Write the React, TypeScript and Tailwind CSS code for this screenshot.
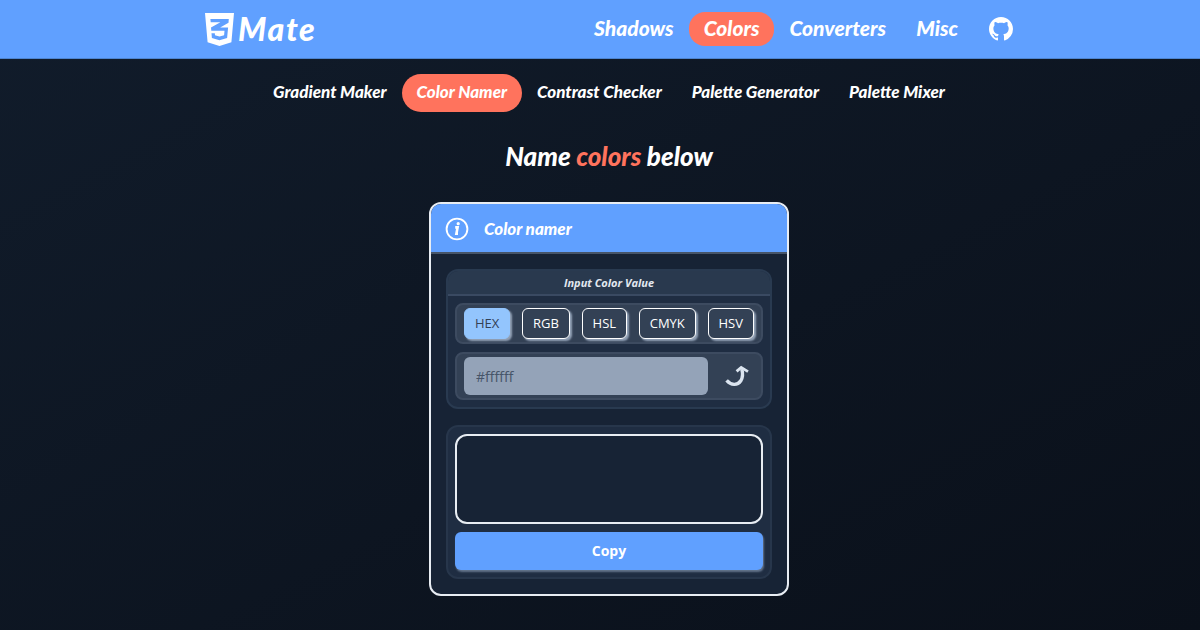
import { BsGithub } from "react-icons/bs";

const display = "font-['Lato',sans-serif] font-black italic";

const mainLinks = ["Shadows", "Colors", "Converters", "Misc"];
const subLinks = [
  "Gradient Maker",
  "Color Namer",
  "Contrast Checker",
  "Palette Generator",
  "Palette Mixer",
];
const formats = ["HEX", "RGB", "HSL", "CMYK", "HSV"];

function ShieldLogo() {
  return (
    <svg viewBox="0 0 29 33" className="h-[33px] w-[29px]" aria-hidden="true">
      <path
        fill="currentColor"
        fillRule="evenodd"
        d="M0 0H29L26.4 29.2 14.5 33 2.6 29.2ZM5.4 6 5.7 9.3H15.4L6 14.6 6.3 17.8H19.5L19.1 22.2 14.5 23.6 10 22.3 9.8 20.2H6.5L6.9 25 14.5 27.2 22.1 25 23.1 14.5H15.2L23.5 9.8 23.8 6Z"
      />
    </svg>
  );
}

function Header() {
  return (
    <header className="border-b border-[#4d84d0] bg-[#60a0ff] pl-[18px]">
      <div className="mx-auto flex h-[58px] max-w-[808px] items-center justify-between">
        <a href="#home" className="flex items-center gap-1 text-white">
          <ShieldLogo />
          <span className="font-['Lato',sans-serif] text-[32px] font-black italic tracking-wider">
            Mate
          </span>
        </a>
        <nav aria-label="Main" className="flex items-center">
          {mainLinks.map((label) => (
            <a
              key={label}
              href={`#${label.toLowerCase()}`}
              className={`${display} rounded-2xl px-[15px] pt-0.5 pb-1 text-[21px] leading-7 text-white ${
                label === "Colors" ? "bg-[#ff735d]" : ""
              }`}
            >
              {label}
            </a>
          ))}
          <a href="#github" aria-label="GitHub" className="ml-4 text-white">
            <BsGithub className="size-6" aria-hidden="true" />
          </a>
        </nav>
      </div>
    </header>
  );
}

function SubNav() {
  return (
    <nav aria-label="Color tools" className="flex justify-center pt-[15px]">
      {subLinks.map((label) => (
        <a
          key={label}
          href={`#${label.toLowerCase().replace(" ", "-")}`}
          className={`${display} rounded-full px-[15px] pt-1.5 pb-2 text-[17px] leading-6 text-white ${
            label === "Color Namer" ? "bg-[#ff735d]" : ""
          }`}
        >
          {label}
        </a>
      ))}
    </nav>
  );
}

function ColorNamer() {
  return (
    <section className="mx-auto mt-[30px] w-full max-w-[360px] overflow-hidden rounded-xl border-2 border-[#e8edf3] bg-[#172335]">
      <div className="flex h-[50px] items-center gap-[15px] border-b-2 border-[#475569] bg-[#60a0ff] px-3.5 pt-0.5 text-white">
        <svg viewBox="0 0 24 24" className="size-6" fill="none" aria-hidden="true">
          <circle cx="12" cy="12" r="10.4" stroke="currentColor" strokeWidth="1.9" />
          <path d="M10.2 10.4h2.4l-1.2 6.4h1.6" stroke="currentColor" strokeWidth="2.6" />
          <circle cx="13.2" cy="6.7" r="1.6" fill="currentColor" />
        </svg>
        <h2 className={`${display} text-[17px] leading-6`}>Color namer</h2>
      </div>
      <div className="flex flex-col gap-4 p-[15px]">
        <div className="overflow-hidden rounded-xl border-2 border-[#293a50] bg-[#1f2d42]">
          <h3 className="border-b-2 border-[#3a4a62] bg-[#29394e] text-center text-[11px] leading-[23px] font-bold text-[#e2e8f0] italic">
            Input Color Value
          </h3>
          <div className="flex flex-col gap-2 p-[7px]">
            <div className="flex h-[41px] items-center justify-between rounded-lg border-2 border-[#3d4b60] bg-[#334155] px-[7px]">
              {formats.map((format) => (
                <button
                  key={format}
                  type="button"
                  aria-pressed={format === "HEX"}
                  className={`h-[31px] rounded-md border px-2.5 text-[13px] shadow-[2px_2px_2px_#94a3b8] ${
                    format === "HEX"
                      ? "border-[#93c5fd] bg-[#93c5fd] text-[#334155]"
                      : "border-white bg-[#334155] text-white"
                  }`}
                >
                  {format}
                </button>
              ))}
            </div>
            <div className="flex h-12 items-center rounded-lg border-2 border-[#3d4b60] bg-[#334155] pl-[7px]">
              <input
                type="text"
                aria-label="Color value"
                placeholder="#ffffff"
                className="h-[38px] min-w-0 flex-1 rounded-md bg-[#94a3b8] px-3 text-sm text-[#1e293b] placeholder:text-[#475569]"
              />
              <button
                type="button"
                aria-label="Find color name"
                className="flex h-full w-[53px] items-center justify-center pl-1 text-[#dbe4ef]"
              >
                <svg viewBox="0 0 24 22" className="h-[22px] w-6" fill="none" aria-hidden="true">
                  <path
                    d="M1.6 15.4C6 20.4 12.4 20.8 15.8 15.8 17.8 12.6 18 8.6 16.8 4"
                    stroke="currentColor"
                    strokeWidth="3.4"
                  />
                  <path d="M11.6 6.4 16.2 2.4 23 6.6" stroke="currentColor" strokeWidth="2.8" />
                </svg>
              </button>
            </div>
          </div>
        </div>
        <div className="flex flex-col gap-2 rounded-xl border-2 border-[#27364b] bg-[#1f2d42] p-[7px]">
          <output
            aria-label="Color name"
            className="block h-[90px] rounded-xl border-2 border-[#e8edf3] bg-[#172335]"
          />
          <button
            type="button"
            className="h-[38px] rounded-md bg-[#60a0ff] text-sm font-bold text-white shadow-[1px_2px_2px_#64748b]"
          >
            Copy
          </button>
        </div>
      </div>
    </section>
  );
}

export default function App() {
  return (
    <div className="min-h-screen bg-linear-to-br from-[#111c2b] to-[#0a101a] font-['Open_Sans','Noto_Sans',sans-serif]">
      <Header />
      <main className="pb-8 pl-[18px]">
        <SubNav />
        <h1 className={`${display} mt-7 text-center text-[26px] leading-8 text-white`}>
          Name <span className="text-[#ff735d]">colors</span> below
        </h1>
        <ColorNamer />
      </main>
    </div>
  );
}
